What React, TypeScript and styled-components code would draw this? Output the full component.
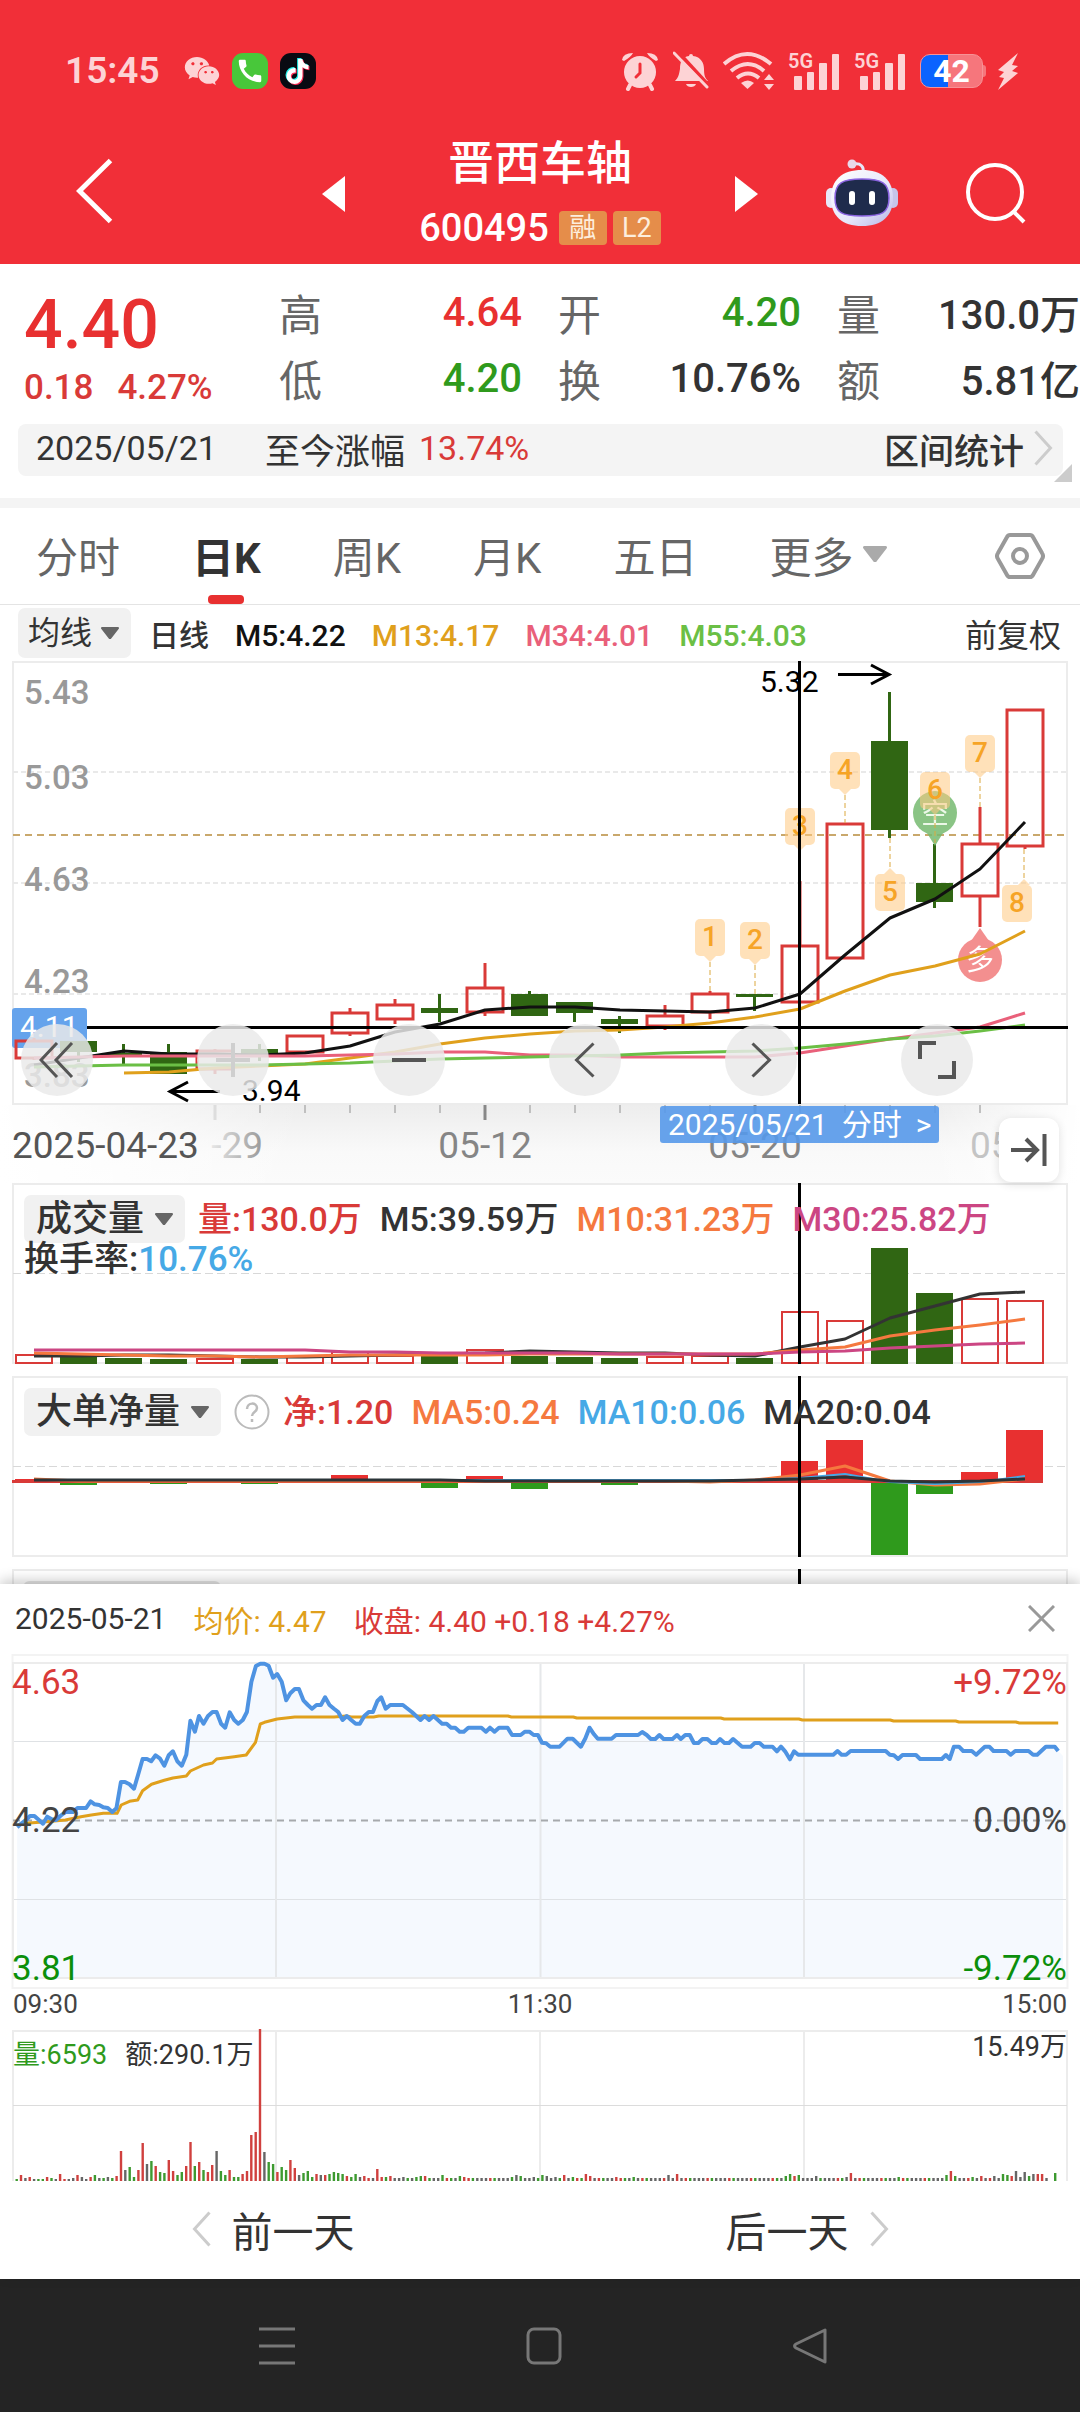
import React from "react";
import styled, { createGlobalStyle, css } from "styled-components";
import { FaWeixin, FaTiktok } from "react-icons/fa";
import { MdCall } from "react-icons/md";

const color = {
  brand: "#f12f38",
  up: "#d93a38",
  upBright: "#e83030",
  down: "#2f9a1c",
  downDark: "#306613",
  ink: "#333333",
  mute: "#666666",
  faint: "#999999",
  gold: "#e0a01c",
  pink: "#e9607a",
  lime: "#6bbf45",
  orange: "#f5793f",
  sky: "#46a9e6",
  magenta: "#cc4683",
  panel: "#f4f4f4",
  line: "#ececec",
  tag: "#65a3ec",
};

const GlobalStyle = createGlobalStyle`
  *, *::before, *::after { box-sizing: border-box; }
  body {
    margin: 0;
    background: #fff;
    color: ${color.ink};
    font-family: Roboto, "Noto Sans CJK SC", sans-serif;
  }
  button, select { font: inherit; color: inherit; border: 0; background: none; padding: 0; margin: 0; }
  button { display: inline-flex; align-items: center; justify-content: center; cursor: pointer; }
  svg { display: block; flex: none; }
`;

/* ---------- header ---------- */

const Header = styled.header`
  background: ${color.brand};
  color: #fff;
`;

const StatusBar = styled.div`
  display: flex;
  justify-content: space-between;
  align-items: center;
  height: 100px;
  padding: 42px 61px 0 65px;
  color: #fdd3d5;
`;

const StatusGroup = styled.div<{ $gap: number }>`
  display: flex;
  align-items: center;
  gap: ${(p) => p.$gap}px;
`;

const Clock = styled.time`
  font-size: 37px;
  line-height: 40px;
  font-weight: 600;
  margin-right: 12px;
`;

const AppBadge = styled.span<{ $bg: string }>`
  display: grid;
  place-items: center;
  width: 36px;
  height: 36px;
  border-radius: 11px;
  background: ${(p) => p.$bg};
  color: #fff;
`;

const TiktokMark = styled(FaTiktok)`
  filter: drop-shadow(1px 1px 0 #fe2c55) drop-shadow(-1px -1px 0 #25f4ee);
`;

const Signal = styled.span`
  display: grid;
  grid-template-columns: 52px;
  height: 40px;
  > * { grid-area: 1 / 1; }
`;

const SignalName = styled.span`
  font-size: 20px;
  line-height: 20px;
  font-weight: 600;
`;

const Battery = styled.span`
  position: relative;
  display: grid;
  place-items: center;
  width: 63px;
  height: 34px;
  border-radius: 10px;
  background: linear-gradient(90deg, #0a63ff 44%, #f6767c 44%);
  border: 1px solid #f79296;
  color: #fff;
  font-size: 32px;
  line-height: 32px;
  font-weight: 700;
  &::after {
    content: "";
    position: absolute;
    right: -4px;
    top: 10px;
    width: 3px;
    height: 12px;
    border-radius: 0 3px 3px 0;
    background: #f6767c;
  }
`;

const NavBar = styled.div`
  display: grid;
  grid-template-columns: 1fr 436px 1fr;
  align-items: center;
  height: 164px;
  padding-bottom: 6px;
`;

const NavLeft = styled.div`
  padding-left: 76px;
`;

const NavCenter = styled.div`
  display: flex;
  justify-content: space-between;
  align-items: center;
  padding-top: 30px;
`;

const NavRight = styled.div`
  display: flex;
  align-items: center;
  justify-content: flex-end;
  gap: 68px;
  padding-right: 54px;
`;

const NavIcon = styled.button`
  margin-top: 28px;
`;

const StockTitle = styled.div`
  display: grid;
  justify-items: center;
  row-gap: 16px;
  padding-top: 2px;
`;

const StockName = styled.h1`
  margin: 0;
  font-size: 46px;
  line-height: 50px;
  font-weight: 500;
`;

const StockCode = styled.div`
  display: flex;
  align-items: center;
  gap: 6px;
  font-size: 38px;
  line-height: 48px;
  font-weight: 500;
`;

const CodeTag = styled.span`
  padding: 0 9px;
  min-width: 48px;
  border-radius: 4px;
  background: #e58d4a;
  color: #fdeedd;
  font-size: 27px;
  line-height: 34px;
  font-weight: 400;
  text-align: center;
  &:first-of-type { margin-left: 4px; }
`;

/* ---------- quote ---------- */

const Quote = styled.section`
  padding-top: 15px;
  border-bottom: 10px solid ${color.panel};
`;

const QuoteGrid = styled.div`
  display: grid;
  grid-template-columns: 1fr repeat(3, 243px);
  column-gap: 36px;
  padding: 0 0 0 24px;
`;

const PriceBlock = styled.div`
  grid-row: span 2;
  padding-top: 6px;
  color: ${color.up};
  white-space: nowrap;
`;

const Price = styled.div`
  font-size: 68px;
  line-height: 80px;
  font-weight: 500;
  color: ${color.upBright};
`;

const Change = styled.div`
  display: flex;
  gap: 24px;
  font-size: 35px;
  line-height: 46px;
  font-weight: 500;
`;

const Stat = styled.div`
  display: flex;
  justify-content: space-between;
  align-items: center;
  height: 66px;
  white-space: nowrap;
`;

const StatName = styled.span`
  font-size: 43px;
  color: ${color.mute};
`;

const StatValue = styled.span<{ $tone?: string }>`
  font-size: 40px;
  font-weight: 500;
  color: ${(p) => p.$tone ?? color.ink};
`;

const RangeBar = styled.div`
  position: relative;
  display: flex;
  align-items: center;
  height: 52px;
  margin: 13px 17px 22px 18px;
  padding: 0 10px 4px 18px;
  border-radius: 8px;
  background: ${color.panel};
  font-size: 34px;
`;

const RangeLabel = styled.span`
  margin-left: 48px;
  margin-right: 14px;
  font-size: 35px;
`;

const RangeLink = styled.a`
  display: flex;
  align-items: center;
  gap: 9px;
  margin-left: auto;
  color: ${color.ink};
  text-decoration: none;
  font-size: 35px;
  font-weight: 500;
`;

const CornerFold = styled.span`
  position: absolute;
  right: -9px;
  bottom: -6px;
  border: 9px solid transparent;
  border-right-color: #ccc;
  border-bottom-color: #ccc;
`;

const Tone = styled.span<{ $tone: string }>`
  color: ${(p) => p.$tone};
`;

/* ---------- tabs and legends ---------- */

const Tabs = styled.nav`
  display: flex;
  align-items: center;
  gap: 72px;
  height: 97px;
  padding: 0 35px 0 36px;
  border-bottom: 1px solid #e4e4e4;
`;

const Tab = styled.button<{ $active?: boolean }>`
  position: relative;
  gap: 10px;
  height: 96px;
  padding-bottom: 4px;
  font-size: 42px;
  color: ${color.mute};
  ${(p) =>
    p.$active &&
    css`
      color: ${color.ink};
      font-weight: 700;
      &::after {
        content: "";
        position: absolute;
        bottom: 0;
        left: calc(50% - 18px);
        width: 36px;
        height: 9px;
        border-radius: 4px;
        background: ${color.upBright};
      }
    `}
`;

const TabSettings = styled.button`
  margin-left: auto;
`;

const AverageRow = styled.div`
  display: flex;
  align-items: center;
  gap: 18px;
  height: 56px;
  padding: 0 19px 0 18px;
  white-space: nowrap;
`;

const AverageList = styled.div`
  display: flex;
  align-items: baseline;
  flex: 1;
  gap: 26px;
  font-size: 30px;
  font-weight: 500;
`;

const AdjustButton = styled.button`
  font-size: 32px;
`;

const Chip = styled.label<{ $size: number }>`
  display: inline-flex;
  align-items: center;
  gap: ${(p) => (p.$size > 32 ? 10 : 8)}px;
  height: ${(p) => (p.$size > 32 ? 48 : 50)}px;
  padding: 0 12px 0 ${(p) => (p.$size > 32 ? 12 : 10)}px;
  border-radius: 7px;
  background: #f1f1f1;
  font-size: ${(p) => p.$size}px;
  line-height: 48px;
`;

const ChipSelect = styled.select`
  appearance: none;
  outline: 0;
`;

const Panel = styled.section`
  display: grid;
  > * { grid-area: 1 / 1; }
`;

const Drawing = styled.svg`
  width: 100%;
  height: auto;
  font-family: Roboto, "Noto Sans CJK SC", sans-serif;
`;

const PanelLegend = styled.div`
  z-index: 1;
  align-self: start;
  padding: 12px 24px 0;
  font-size: 34px;
  font-weight: 500;
  white-space: nowrap;
`;

const LegendLine = styled.div`
  display: flex;
  align-items: center;
  column-gap: 13px;
  line-height: 48px;
`;

const LegendValues = styled.div`
  display: flex;
  align-items: baseline;
  column-gap: 18px;
`;

const LegendNote = styled.div`
  font-size: 35px;
  line-height: 34px;
`;

/* ---------- controls lying over the main chart ---------- */

const Stage = styled.section`
  position: relative;
`;

const Controls = styled.div`
  position: absolute;
  left: 21px;
  top: 363px;
  display: flex;
  gap: 104px;
`;

const RoundButton = styled.button<{ $faded?: boolean }>`
  width: 72px;
  height: 72px;
  border-radius: 50%;
  background: rgba(234, 234, 234, 0.84);
  color: ${(p) => (p.$faded ? "#cfcfcf" : "#555")};
`;

const DayTag = styled.a`
  position: absolute;
  left: 660px;
  top: 445px;
  display: flex;
  gap: 14px;
  padding: 0 8px;
  border-radius: 3px;
  background: rgba(86, 153, 234, 0.9);
  color: #fff;
  font-size: 30px;
  line-height: 37px;
  text-decoration: none;
  white-space: nowrap;
`;

const LatestButton = styled.button`
  position: absolute;
  z-index: 2;
  right: 21px;
  top: 457px;
  width: 60px;
  height: 64px;
  border-radius: 12px;
  background: #fff;
  box-shadow: 0 2px 10px rgba(0, 0, 0, 0.12);
`;

/* ---------- intraday sheet ---------- */

const Sheet = styled.section`
  position: relative;
  background: #fff;
  box-shadow: 0 -4px 12px rgba(0, 0, 0, 0.2);
`;

const SheetHead = styled.div`
  display: flex;
  align-items: center;
  gap: 27px;
  height: 69px;
  padding: 0 25px 0 15px;
  font-size: 30px;
  white-space: nowrap;
`;

const CloseButton = styled.button`
  margin-left: auto;
`;

const TimeAxis = styled.div`
  display: flex;
  justify-content: space-between;
  height: 40px;
  padding: 0 13px;
  font-size: 26px;
  line-height: 30px;
  color: #444;
`;

const MinuteLegend = styled.div`
  z-index: 1;
  display: flex;
  align-items: start;
  gap: 18px;
  padding: 2px 13px;
  font-size: 27px;
  line-height: 32px;
  > :not(:last-child) { padding-top: 8px; }
  > :last-child { margin-left: auto; }
`;

const DayNav = styled.div`
  display: grid;
  grid-template-columns: 1fr 1fr;
  height: 98px;
  padding: 0 6px 2px;
`;

const DayButton = styled.button`
  gap: 20px;
  font-size: 41px;
`;

const SystemBar = styled.footer`
  display: flex;
  align-items: center;
  justify-content: space-between;
  height: 133px;
  padding: 0 252px 0 259px;
  background: #242424;
  color: #777;
`;

/* ---------- icons ---------- */

type ChevronProps = { dir: "left" | "right"; w: number; h: number; stroke: number; tone?: string };
const Chevron = ({ dir, w, h, stroke, tone = "currentColor" }: ChevronProps) => {
  const a = stroke / 2 + 1;
  const d =
    dir === "left"
      ? `M${w - a} ${a}L${a} ${h / 2}L${w - a} ${h - a}`
      : `M${a} ${a}L${w - a} ${h / 2}L${a} ${h - a}`;
  return (
    <svg width={w} height={h} viewBox={`0 0 ${w} ${h}`} fill="none" stroke={tone} strokeWidth={stroke}>
      <path d={d} />
    </svg>
  );
};

const Caret = ({ w = 18, tone = color.mute }: { w?: number; tone?: string }) => (
  <svg width={w} height={w * 0.7} viewBox="0 0 18 12" preserveAspectRatio="none">
    <path d="M1 0h16a1 1 0 0 1 .8 1.600L9.800 11.500a1 1 0 0 1-1.600 0L.2 1.600A1 1 0 0 1 1 0z" fill={tone} />
  </svg>
);

const AlarmIcon = () => (
  <svg width="38" height="40" viewBox="0 0 38 40">
    <path d="M1 9Q2 2 12 2Q10 6 3 10zM37 9Q36 2 26 2Q28 6 35 10z" fill="currentColor" />
    <path d="M9 34l-2 4M29 34l2 4" stroke="currentColor" strokeWidth="4" strokeLinecap="round" />
    <circle cx="19" cy="21" r="16" fill="currentColor" />
    <path d="M19 13v9l-4 4" fill="none" stroke={color.brand} strokeWidth="3" strokeLinecap="round" />
  </svg>
);

const MutedBellIcon = () => (
  <svg width="36" height="40" viewBox="0 0 36 40">
    <path d="M18 3q2 0 2 2c8 1 11 7 11 13 0 6 1 9 4 12H2c3-3 4-6 5-12C7 11 9 6 16 5q0-2 2-2z" fill="currentColor" />
    <path d="M13 33h10c-1 4-9 4-10 0z" fill="currentColor" />
    <path d="M3 -1l33 36" stroke={color.brand} strokeWidth="4" />
    <path d="M1 2l33 34" stroke="currentColor" strokeWidth="3" strokeLinecap="round" />
  </svg>
);

const WifiIcon = () => (
  <svg width="51" height="40" viewBox="0 0 51 40" fill="none" stroke="currentColor" strokeWidth="4">
    <path d="M1 13q23-20 47 0M8 20q17-14 33 0M14 27q11-9 22 0" />
    <path d="M18 32q7-5 13 0l-6.500 6z" fill="currentColor" stroke="none" />
    <path d="M41 29l5-6 5 6zM41 33l5 6 5-6z" fill="currentColor" stroke="none" />
  </svg>
);

const BarsIcon = () => (
  <svg width="52" height="40" viewBox="0 0 52 40" fill="currentColor">
    <rect x="6" y="25" width="8" height="14" rx="1" />
    <rect x="19" y="21" width="7" height="18" rx="1" />
    <rect x="31" y="12" width="8" height="27" rx="1" />
    <rect x="44" y="3" width="7" height="36" rx="1" />
  </svg>
);

const BoltIcon = () => (
  <svg width="22" height="38" viewBox="0 0 22 38">
    <path d="M21 1L1 18l6 2-5 5 5 1-6 12 20-17-6-2 6-5-6-1z" fill="currentColor" />
  </svg>
);

const RobotIcon = () => (
  <svg width="72" height="68" viewBox="0 0 72 68">
    <defs>
      <linearGradient id="shell" x1="0" y1="0" x2="1" y2="1">
        <stop offset="0" stopColor="#ffffff" />
        <stop offset="0.6" stopColor="#e6e6fa" />
        <stop offset="1" stopColor="#b5b4e6" />
      </linearGradient>
    </defs>
    <path d="M37 13c1-5-2-9-9-8" fill="none" stroke="#e6e6f8" strokeWidth="3" />
    <circle cx="26" cy="5" r="4.500" fill="#e9d9ea" />
    <rect x="0" y="29" width="10" height="20" rx="5" fill="#e8e8f8" />
    <rect x="62" y="29" width="10" height="20" rx="5" fill="#c6c5ea" />
    <path d="M36 11c20 0 31 10 31 28S56 67 36 67 5 57 5 39s11-28 31-28z" fill="url(#shell)" />
    <path d="M36 20c20 0 27 4 27 19s-7 18-27 18S9 54 9 39s7-19 27-19z" fill="#1f2b4c" stroke="#8a63e0" strokeWidth="1.500" />
    <rect x="23" y="32" width="6" height="14" rx="3" fill="#fff" />
    <rect x="43" y="32" width="6" height="14" rx="3" fill="#fff" />
  </svg>
);

const SearchIcon = () => (
  <svg width="60" height="62" viewBox="0 0 60 62" fill="none" stroke="#fff" strokeWidth="4">
    <circle cx="29" cy="30" r="27" />
    <path d="M47 49l11 11" />
  </svg>
);

const HexIcon = () => (
  <svg width="50" height="48" viewBox="0 0 50 48" fill="none" stroke={color.faint} strokeWidth="4">
    <path d="M15 3h20q2 0 3 2l9 16q2 3 0 6l-9 16q-1 2-3 2H15q-2 0-3-2L3 27q-2-3 0-6l9-16q1-2 3-2z" />
    <circle cx="25" cy="24" r="7" />
  </svg>
);

/* ---------- data ---------- */

const STEP = 45;
const FIRST = 34;
const cx = (i: number) => FIRST + i * STEP + (i > 3 ? 1 : 0);

// [direction, high, body top, body bottom, low] in drawing units
type Candle = [1 | -1, number, number, number, number];
const candles: Candle[] = [
  [1, 1038, 1041, 1058, 1060], [-1, 1041, 1041, 1052, 1062], [-1, 1044, 1053, 1055, 1064],
  [-1, 1044, 1052, 1074, 1074], [1, 1049, 1051, 1069, 1074], [-1, 1044, 1049, 1057, 1061],
  [1, 1036, 1036, 1052, 1052], [1, 1008, 1013, 1033, 1036], [1, 999, 1005, 1019, 1024],
  [-1, 994, 1008, 1013, 1022], [1, 963, 988, 1012, 1016], [-1, 991, 994, 1016, 1016],
  [-1, 1002, 1002, 1013, 1022], [-1, 1016, 1019, 1024, 1033], [1, 1005, 1016, 1026, 1030],
  [1, 991, 994, 1012, 1019], [-1, 994, 994, 997, 1011], [1, 881, 946, 1002, 1002],
  [1, 824, 824, 958, 958], [-1, 692, 741, 830, 838], [-1, 844, 883, 902, 908],
  [1, 807, 844, 896, 927], [1, 710, 710, 846, 849],
];

const avg5 = [1065, 1058, 1051, 1054, 1054, 1055, 1053, 1046, 1032, 1024, 1010, 1007, 1007, 1010, 1011, 1012, 1008, 994, 955, 918, 899, 869, 822];
const avg13 = [1073, 1072, 1068, 1066, 1064, 1058, 1052, 1044, 1038, 1034, 1031, 1030, 1027, 1023, 1017, 1009, 991, 975, 966, 954, 931];
const avg34 = [1058, 1057, 1056, 1056, 1056, 1056, 1056, 1055, 1054, 1052, 1052, 1055, 1055, 1057, 1057, 1057, 1057, 1053, 1046, 1039, 1033, 1027, 1013];
const avg55 = [1067, 1066, 1065, 1065, 1065, 1065, 1064, 1063, 1061, 1059, 1058, 1057, 1056, 1055, 1053, 1052, 1051, 1048, 1044, 1039, 1036, 1031, 1025];

const volumeTops = [1355, 1356, 1358, 1359, 1359, 1359, 1356, 1352, 1356, 1356, 1350, 1356, 1357, 1358, 1357, 1356, 1358, 1312, 1321, 1248, 1293, 1299, 1301];
const vol5 = [1356, 1356, 1355, 1355, 1356, 1357, 1357, 1356, 1355, 1354, 1353, 1351, 1352, 1353, 1353, 1355, 1356, 1347, 1339, 1318, 1306, 1294, 1292];
const vol10 = [1353, 1354, 1355, 1356, 1356, 1357, 1356, 1355, 1355, 1355, 1355, 1354, 1354, 1354, 1354, 1354, 1354, 1350, 1347, 1336, 1330, 1325, 1319];
const vol30 = [1350, 1350, 1350, 1350, 1350, 1350, 1350, 1352, 1352, 1353, 1353, 1353, 1353, 1354, 1354, 1354, 1354, 1352, 1351, 1348, 1346, 1344, 1343];

const netEnds: Record<number, number> = { 0: 1479, 1: 1485, 3: 1484, 5: 1484, 7: 1475, 9: 1488, 10: 1476, 11: 1489, 13: 1485, 17: 1461, 18: 1440, 19: 1555, 20: 1494, 21: 1472, 22: 1430 };
const flat = (n: number, y: number) => Array.from({ length: n }, () => y);
const net5 = [1479, ...flat(14, 1481), 1482, 1480, 1475, 1466, 1481, 1485, 1484, 1479];
const net10 = [...flat(17, 1480), 1478, 1474, 1482, 1484, 1482, 1476];
const net20 = [...flat(10, 1480), ...flat(6, 1481), 1480, 1479, 1477, 1481, 1482, 1481, 1479];

const series = (ys: number[], from = 0) => ys.map((y, i) => `${cx(i + from)},${y}`).join(" ");

// Intraday samples on the recorder's grid: x in 1/2.904 units, y in thirds
const fromGrid = (flatList: number[]) => {
  const out: string[] = [];
  for (let i = 0; i < flatList.length; i += 2)
    out.push(`${(flatList[i] / 2.904).toFixed(1)},${(1590 + flatList[i + 1] / 3).toFixed(1)}`);
  return out.join(" ");
};

const priceLine = fromGrid([
  50,712,60,702,75,690,87,678,100,678,113,690,125,701,137,680,150,688,163,690,175,678,190,666,212,666,225,654,250,654,263,634,
  275,643,288,645,300,652,313,654,326,666,338,655,351,576,363,576,376,583,389,596,401,554,414,507,427,507,439,514,452,496,464,505,
  477,527,490,496,502,484,515,514,528,527,541,494,553,392,566,425,578,378,591,401,604,378,617,366,629,366,642,401,654,413,667,367,
  680,390,692,401,705,390,717,366,730,275,743,228,756,221,768,221,780,227,793,263,805,252,818,275,831,331,843,310,856,297,868,297,
  881,331,894,345,906,356,919,345,932,345,944,322,957,345,970,356,982,366,995,390,1007,378,1020,390,1033,401,1045,401,1058,378,
  1071,366,1083,366,1096,333,1107,322,1120,356,1133,345,1170,345,1196,366,1221,390,1233,378,1246,390,1259,378,1284,401,1297,401,
  1310,413,1322,413,1335,425,1347,425,1360,413,1398,413,1411,425,1423,413,1436,425,1449,413,1474,413,1487,435,1512,435,1524,425,
  1537,425,1550,435,1562,435,1574,458,1586,460,1598,470,1625,470,1648,446,1663,446,1687,470,1700,445,1712,413,1725,433,1736,446,
  1776,446,1789,435,1853,435,1865,426,1878,435,1890,447,1903,447,1915,435,1927,447,1953,447,1966,435,1977,447,1990,435,2003,435,
  2015,459,2028,459,2040,447,2054,447,2067,459,2080,459,2091,447,2104,459,2117,459,2129,447,2155,470,2180,470,2192,459,2206,459,
  2218,470,2243,470,2256,484,2268,470,2280,484,2294,508,2306,484,2318,494,2420,494,2432,483,2444,494,2457,494,2470,483,2572,483,
  2584,494,2596,496,2608,507,2621,495,2660,495,2672,507,2735,507,2747,495,2758,507,2770,470,2785,470,2797,483,2822,483,2835,494,
  2860,470,2873,470,2885,483,2923,483,2935,494,2948,483,2987,483,3000,494,3012,494,3037,470,3063,470,3073,483,
]);

const meanLine = fromGrid([
  50,705,85,699,125,696,190,690,235,680,265,675,300,670,340,670,352,645,376,634,400,630,414,602,440,583,477,571,502,564,541,558,
  553,543,591,525,617,519,629,507,680,500,715,495,742,457,756,402,768,397,805,387,856,381,970,381,1005,378,1020,381,1085,381,
  1100,378,1475,378,1485,381,1665,381,1675,384,2093,384,2103,387,2320,387,2330,390,2585,390,2595,393,2775,393,2785,396,2950,396,
  2960,399,3073,399,
]);

// One entry a minute: r up, g down, k unchanged, followed by the bar height
const openingMinutes =
  "g1 r5 k2 r3 k1 g1 g1 r3 g2 k1 r6 r1 k1 k2 r5 k3 k1 r3 g5 k2 g2 k3 g2 r4 r29 k10 g13 g3 r10 r37 k16 g19 r14 g8 g7 r20 r9 g5 g8 r14 r38 g14 r18 g10 r8 r15 k29 g9 g5 r10 g3 g3 r6 r9 r45 r48 r151 k28 g18 g16 r8 g13 g10 r20 r12 k5 g7 g9 g3 r6 k5 r5 g6 g8 g7 g6 r4 g3 g6 k3 r4 r2 k2 r11 r3 g3 r4";
const laterMinutes: Record<number, string> = {
  89: "k3", 92: "g3", 93: "g4", 94: "r4", 98: "g5", 102: "g4", 103: "r3", 114: "g3", 115: "k5", 116: "g4", 119: "k3",
  121: "g5", 122: "k4", 124: "k3", 126: "r5", 128: "g3", 131: "r6", 132: "r4", 138: "r3", 142: "g3", 150: "k5", 152: "r6",
  177: "g4", 178: "g6", 179: "r4", 180: "g5", 184: "k4", 191: "k3", 192: "r7", 203: "g3", 214: "g5", 215: "r9", 216: "g4",
  220: "g3", 222: "r4", 225: "k4", 227: "g6", 228: "g5", 229: "r4", 230: "k9", 231: "k3", 232: "k8", 233: "g4", 234: "k6",
  235: "r6", 236: "r6", 237: "k2", 238: "", 239: "g7",
};
const minuteTone: Record<string, string> = { r: "#d0403e", g: "#3d9a30", k: "#666" };
const minutes = (() => {
  const list = openingMinutes.split(" ");
  const filler = ["g2", "k2", "k2", "r2", "k2"];
  for (let i = list.length; i < 240; i++) list.push(laterMinutes[i] ?? filler[(i * 7) % 5]);
  return list;
})();

type Mark = { n: number; x: number; top: number; tipX?: number; from: number; to: number; up?: boolean };
const marks: Mark[] = [
  { n: 1, x: 710, top: 919, from: 962, to: 991 },
  { n: 2, x: 755, top: 922, from: 965, to: 994 },
  { n: 3, x: 800, top: 808, from: 850, to: 850 },
  { n: 4, x: 845, top: 752, from: 795, to: 823 },
  { n: 5, x: 890, top: 874, from: 838, to: 868, up: true },
  { n: 6, x: 935, top: 772, from: 815, to: 843 },
  { n: 7, x: 980, top: 735, from: 778, to: 807 },
  { n: 8, x: 1017, top: 885, tipX: 1024, from: 849, to: 880, up: true },
];

/* ---------- chart parts ---------- */

const Line = ({ pts, tone, w = 3 }: { pts: string; tone: string; w?: number }) => (
  <polyline points={pts} fill="none" stroke={tone} strokeWidth={w} strokeLinejoin="round" />
);

const Frame = ({ y, h }: { y: number; h: number }) => (
  <rect x="13" y={y} width="1054" height={h} fill="none" stroke={color.line} strokeWidth="2" />
);

const Crosshair = ({ y1, y2 }: { y1: number; y2: number }) => (
  <path d={`M799.500 ${y1}V${y2}`} stroke="#000" strokeWidth="3" />
);

const MarkLabel = ({ n, x, top, tipX, from, to, up }: Mark) => {
  const tip = tipX ?? x;
  return (
    <g>
      <path d={`M${tip} ${from}V${to}`} stroke="#dba83e" strokeWidth="1" strokeDasharray="5 3" />
      <rect x={x - 15} y={top} width="30" height="37" rx="5" fill="#ffc880" fillOpacity="0.55" />
      <path
        d={up ? `M${tip - 6} ${top}l6 -6l6 6z` : `M${tip - 6} ${top + 37}l6 6l6 -6z`}
        fill="#ffc880"
        fillOpacity="0.55"
      />
      <text x={x} y={top + 27} textAnchor="middle" fontSize="28" fontWeight="500" fill="#f6a426">
        {n}
      </text>
    </g>
  );
};

const CandleChart = () => (
  <Drawing viewBox="0 661 1080 522" role="img" aria-label="日K">
    <defs>
      <linearGradient id="hazeDown" x1="0" y1="0" x2="0" y2="1">
        <stop offset="0" stopColor="#ededed" />
        <stop offset="0.6" stopColor="#f9f9f9" />
        <stop offset="1" stopColor="#fbfbfb" />
      </linearGradient>
      <linearGradient id="hazeSide" x1="0" y1="0" x2="1" y2="0">
        <stop offset="0" stopColor="#fff" stopOpacity="1" />
        <stop offset="0.28" stopColor="#fff" stopOpacity="0" />
        <stop offset="0.86" stopColor="#fff" stopOpacity="0" />
        <stop offset="1" stopColor="#fff" stopOpacity="1" />
      </linearGradient>
      <linearGradient id="dateFade" x1="0" y1="0" x2="1" y2="0">
        <stop offset="0" stopColor="#e6e6e6" />
        <stop offset="1" stopColor="#999" />
      </linearGradient>
    </defs>
    <rect x="0" y="1105" width="1080" height="78" fill="url(#hazeDown)" />
    <rect x="0" y="1105" width="1080" height="78" fill="url(#hazeSide)" />
    <Frame y={662} h={442} />
    <path d="M13 772H1067M13 883H1067M13 994H1067" stroke="#e9e9e9" strokeWidth="2" strokeDasharray="5 3" />
    <path d="M13 835H1067" stroke="#c9a86c" strokeWidth="2" strokeDasharray="7 5" />
    <g fontSize="33" fontWeight="500" fill={color.faint}>
      <text x="24" y="704">5.43</text>
      <text x="24" y="789">5.03</text>
      <text x="24" y="891">4.63</text>
      <text x="24" y="993">4.23</text>
      <text x="24" y="1087">3.83</text>
    </g>
    {Array.from({ length: 17 }, (_, k) => k + 4).concat([21]).map((i) => {
      const major = i === 4 || i === 10 || i === 16;
      return (
        <path
          key={i}
          d={`M${cx(i)} 1105V${major ? 1120 : 1113}`}
          stroke={major && i > 4 ? "#888" : i === 4 ? "#ddd" : "#c0c0c0"}
          strokeWidth={major ? 3 : 2}
        />
      );
    })}
    <rect x="12" y="1008" width="75" height="40" rx="3" fill={color.tag} />
    <text x="20" y="1037" fontSize="30" fill="#fff">4.11</text>
    {candles.map(([dir, high, top, bottom, low], i) => {
      const x = cx(i);
      return dir > 0 ? (
        <g key={i} stroke={color.up} strokeWidth="3" fill="none">
          <rect x={x - 18} y={top} width="36" height={bottom - top} />
          <path d={`M${x} ${high}V${top}M${x} ${bottom}V${low}`} />
        </g>
      ) : (
        <g key={i} fill={color.downDark}>
          <rect x={x - 19} y={top} width="37" height={bottom - top} />
          <rect x={x - 2} y={high} width="3" height={low - high} />
        </g>
      );
    })}
    <g opacity="0.85">
      <circle cx="935" cy="813" r="22" fill="#76ba70" />
      <path d="M927 833h16l-8 13z" fill="#76ba70" />
      <text x="935" y="824" textAnchor="middle" fontSize="28" fill="#e9f7e4">空</text>
      <circle cx="980" cy="960" r="22" fill="#f27c7c" />
      <path d="M971 941h18l-9 -13z" fill="#f27c7c" />
      <text x="980" y="970" textAnchor="middle" fontSize="28" fill="#fff">多</text>
    </g>
    <Line pts={series(avg5)} tone="#111" />
    <Line pts={series(avg13, 2)} tone={color.gold} />
    <Line pts={series(avg34)} tone={color.pink} />
    <Line pts={series(avg55)} tone={color.lime} />
    {marks.map((m) => (
      <MarkLabel key={m.n} {...m} />
    ))}
    <g fontSize="30" fill="#000">
      <text x="760" y="692">5.32</text>
      <text x="242" y="1101">3.94</text>
    </g>
    <path d="M838 674.500H889M871 665l18 9.500l-18 9.500M220 1091.500H170M188 1082l-18 9.500l18 9.500" fill="none" stroke="#000" strokeWidth="3" />
    <path d="M87 1027.500H1068" stroke="#000" strokeWidth="3" />
    <Crosshair y1={661} y2={1104} />
    <g fontSize="37" fontWeight="400" fill="#858585">
      <text x="12" y="1158" fill="#555">2025-04-23</text>
      <text x="263" y="1158" textAnchor="end" fill="url(#dateFade)">-29</text>
      <text x="485" y="1158" textAnchor="middle">05-12</text>
      <text x="755" y="1158" textAnchor="middle">05-20</text>
      <text x="970" y="1158" fill="#c4c4c4">05</text>
    </g>
  </Drawing>
);

const VolumeChart = () => (
  <Drawing viewBox="0 1183 1080 193" role="img" aria-label="成交量">
    <Frame y={1184} h={179} />
    <path d="M13 1273.500H1067" stroke="#d8d8d8" strokeDasharray="8 4" />
    {volumeTops.map((top, i) =>
      candles[i][0] > 0 ? (
        <rect key={i} x={cx(i) - 18} y={top} width="36" height={1363 - top} fill="none" stroke={color.up} strokeWidth="2" />
      ) : (
        <rect key={i} x={cx(i) - 19} y={top} width="37" height={1364 - top} fill={color.downDark} />
      )
    )}
    <Line pts={series(vol5)} tone={color.ink} />
    <Line pts={series(vol10)} tone={color.orange} />
    <Line pts={series(vol30)} tone={color.magenta} />
    <Crosshair y1={1183} y2={1364} />
  </Drawing>
);

const NetChart = () => (
  <Drawing viewBox="0 1376 1080 193" role="img" aria-label="大单净量">
    <Frame y={1377} h={179} />
    <path d="M13 1466.500H1067" stroke="#d8d8d8" strokeDasharray="8 4" />
    {Object.entries(netEnds).map(([k, end]) => (
      <rect
        key={k}
        x={cx(Number(k)) - 19}
        y={Math.min(end, 1482)}
        width="37"
        height={Math.abs(end - 1482)}
        fill={end < 1482 ? color.upBright : color.down}
      />
    ))}
    <path d={`M12 1481.500H${cx(22) + 18}`} stroke={color.up} strokeWidth="3" />
    <Line pts={series(net5)} tone={color.orange} />
    <Line pts={series(net10)} tone={color.sky} w={2} />
    <Line pts={series(net20)} tone="#2b3438" />
    <Crosshair y1={1376} y2={1557} />
  </Drawing>
);

const NextPanelPeek = () => (
  <Drawing viewBox="0 1569 1080 15" aria-hidden="true">
    <path d="M13 1584V1570H1067V1584" fill="none" stroke={color.line} strokeWidth="2" />
    <path d="M24 1584q2-3 6-3h184q4 0 6 3z" fill="#e4e4e4" />
    <Crosshair y1={1569} y2={1584} />
  </Drawing>
);

const IntradayChart = () => (
  <Drawing viewBox="0 1653 1080 336" role="img" aria-label="分时">
    <rect x="12.500" y="1655" width="1055" height="333" fill="none" stroke="#f3f3f3" strokeWidth="2" />
    <polygon points={`17,1978 ${priceLine} 1063,1756 1063,1978`} fill="#f5f9fe" />
    <path d="M13 1741.500H1067M13 1899.500H1067" stroke="#dfe2e5" />
    <path d="M276 1663V1978M540.500 1663V1978M804 1663V1978" stroke="#e6e8ea" strokeWidth="2" />
    <rect x="13" y="1663" width="1054" height="315" fill="none" stroke={color.line} strokeWidth="2" />
    <path d="M13 1820.500H1067" stroke="#a6a9ac" strokeWidth="2" strokeDasharray="7 5" />
    <Line pts={meanLine} tone={color.gold} />
    <Line pts={priceLine} tone="#4e93e2" w={4} />
    <g fontSize="35">
      <text x="12" y="1694" fill={color.up}>4.63</text>
      <text x="12" y="1832" fill="#444">4.22</text>
      <text x="12" y="1980" fill="#0b8f0b">3.81</text>
      <g textAnchor="end">
        <text x="1067" y="1694" fill={color.up}>+9.72%</text>
        <text x="1067" y="1832" fill="#444">0.00%</text>
        <text x="1067" y="1980" fill="#0b8f0b">-9.72%</text>
      </g>
    </g>
  </Drawing>
);

const MinuteChart = () => (
  <Drawing viewBox="0 2029 1080 152" role="img" aria-label="分时成交量">
    <path d="M13 2181V2031H1067V2181M276 2031V2181M540 2031V2181M804 2031V2181" fill="none" stroke={color.line} strokeWidth="2" />
    <path d="M13 2105.500H1067" stroke="#dcdcdc" />
    {minutes.map((m, i) =>
      m ? (
        <rect
          key={i}
          x={(15.5 + i * 4.345).toFixed(1)}
          y={2180 - Number(m.slice(1))}
          width="2.400"
          height={Number(m.slice(1)) + 1}
          fill={minuteTone[m[0]]}
        />
      ) : null
    )}
  </Drawing>
);

const SignalMeter = () => (
  <Signal>
    <SignalName>5G</SignalName>
    <BarsIcon />
  </Signal>
);

const Picker = ({ name, size, options }: { name: string; size: number; options: string[] }) => (
  <Chip $size={size}>
    <ChipSelect aria-label={name} defaultValue={options[0]}>
      {options.map((o) => (
        <option key={o}>{o}</option>
      ))}
    </ChipSelect>
    <Caret />
  </Chip>
);

const stats: [string, string, string?][] = [
  ["高", "4.64", color.upBright],
  ["开", "4.20", color.down],
  ["量", "130.0万"],
  ["低", "4.20", color.down],
  ["换", "10.76%"],
  ["额", "5.81亿"],
];

export default function App() {
  return (
    <>
      <GlobalStyle />
      <Header>
        <StatusBar>
          <StatusGroup $gap={12}>
            <Clock>15:45</Clock>
            <FaWeixin size={36} />
            <AppBadge $bg="#48c73a"><MdCall size={30} /></AppBadge>
            <AppBadge $bg="#090a12"><TiktokMark size={25} /></AppBadge>
          </StatusGroup>
          <StatusGroup $gap={14}>
            <AlarmIcon />
            <MutedBellIcon />
            <WifiIcon />
            <SignalMeter />
            <SignalMeter />
            <Battery>42</Battery>
            <BoltIcon />
          </StatusGroup>
        </StatusBar>
        <NavBar>
          <NavLeft>
            <NavIcon aria-label="返回"><Chevron dir="left" w={38} h={68} stroke={5} /></NavIcon>
          </NavLeft>
          <NavCenter>
            <button aria-label="上一只">
              <svg width="23" height="36" viewBox="0 0 23 36"><path d="M23 0V36L0 18z" fill="#fff" /></svg>
            </button>
            <StockTitle>
              <StockName>晋西车轴</StockName>
              <StockCode>
                600495
                <CodeTag>融</CodeTag>
                <CodeTag>L2</CodeTag>
              </StockCode>
            </StockTitle>
            <button aria-label="下一只">
              <svg width="23" height="36" viewBox="0 0 23 36"><path d="M0 0V36L23 18z" fill="#fff" /></svg>
            </button>
          </NavCenter>
          <NavRight>
            <NavIcon aria-label="智能助手"><RobotIcon /></NavIcon>
            <NavIcon aria-label="搜索"><SearchIcon /></NavIcon>
          </NavRight>
        </NavBar>
      </Header>

      <Quote>
        <QuoteGrid>
          <PriceBlock>
            <Price>4.40</Price>
            <Change><span>0.18</span><span>4.27%</span></Change>
          </PriceBlock>
          {stats.map(([name, value, tone]) => (
            <Stat key={name}>
              <StatName>{name}</StatName>
              <StatValue $tone={tone}>{value}</StatValue>
            </Stat>
          ))}
        </QuoteGrid>
        <RangeBar>
          <span>2025/05/21</span>
          <RangeLabel>至今涨幅</RangeLabel>
          <Tone $tone={color.up}>13.74%</Tone>
          <RangeLink href="#range">
            区间统计
            <Chevron dir="right" w={20} h={38} stroke={3} tone="#ccc" />
          </RangeLink>
          <CornerFold />
        </RangeBar>
      </Quote>

      <Tabs>
        <Tab>分时</Tab>
        <Tab $active>日K</Tab>
        <Tab>周K</Tab>
        <Tab>月K</Tab>
        <Tab>五日</Tab>
        <Tab aria-haspopup="menu">更多<Caret w={24} tone="#aaa" /></Tab>
        <TabSettings aria-label="设置"><HexIcon /></TabSettings>
      </Tabs>

      <AverageRow>
        <Picker name="主图指标" size={32} options={["均线"]} />
        <AverageList>
          <span>日线</span>
          <Tone $tone="#111">M5:4.22</Tone>
          <Tone $tone={color.gold}>M13:4.17</Tone>
          <Tone $tone={color.pink}>M34:4.01</Tone>
          <Tone $tone={color.lime}>M55:4.03</Tone>
        </AverageList>
        <AdjustButton>前复权</AdjustButton>
      </AverageRow>

      <Stage>
        <CandleChart />
        <Controls>
          <RoundButton aria-label="最早">
            <svg width="36" height="36" viewBox="0 0 36 36" fill="none" stroke="currentColor" strokeWidth="3"><path d="M18 1L2 18l16 17M33 1L17 18l16 17" /></svg>
          </RoundButton>
          <RoundButton aria-label="放大" $faded>
            <svg width="34" height="34" viewBox="0 0 34 34" stroke="currentColor" strokeWidth="4"><path d="M17 0V34M0 17H34" /></svg>
          </RoundButton>
          <RoundButton aria-label="缩小">
            <svg width="34" height="34" viewBox="0 0 34 34" stroke="currentColor" strokeWidth="4"><path d="M0 17H34" /></svg>
          </RoundButton>
          <RoundButton aria-label="左移"><Chevron dir="left" w={22} h={38} stroke={3} /></RoundButton>
          <RoundButton aria-label="右移"><Chevron dir="right" w={22} h={38} stroke={3} /></RoundButton>
          <RoundButton aria-label="全屏">
            <svg width="38" height="38" viewBox="0 0 38 38" fill="none" stroke="currentColor" strokeWidth="4"><path d="M2 18V2H18M36 20V36H20" /></svg>
          </RoundButton>
        </Controls>
        <DayTag href="#day"><span>2025/05/21</span><span>分时</span><span>&gt;</span></DayTag>
        <LatestButton aria-label="最新">
          <svg width="36" height="34" viewBox="0 0 36 34" fill="none" stroke="#555" strokeWidth="4"><path d="M0 17H25M15 6l11 11-11 11M33.500 1V33" /></svg>
        </LatestButton>
      </Stage>

      <Panel>
        <VolumeChart />
        <PanelLegend>
          <LegendLine>
            <Picker name="副图指标一" size={36} options={["成交量"]} />
            <LegendValues>
              <Tone $tone={color.up}>量:130.0万</Tone>
              <Tone $tone={color.ink}>M5:39.59万</Tone>
              <Tone $tone={color.orange}>M10:31.23万</Tone>
              <Tone $tone={color.magenta}>M30:25.82万</Tone>
            </LegendValues>
          </LegendLine>
          <LegendNote>换手率:<Tone $tone={color.sky}>10.76%</Tone></LegendNote>
        </PanelLegend>
      </Panel>

      <Panel>
        <NetChart />
        <PanelLegend>
          <LegendLine>
            <Picker name="副图指标二" size={36} options={["大单净量"]} />
            <button aria-label="指标说明">
              <svg width="36" height="36" viewBox="0 0 36 36">
                <circle cx="18" cy="18" r="16.500" fill="none" stroke="#bbb" strokeWidth="2" />
                <path d="M13 15c0-7 10-7 10-1 0 4-5 4-5 8M18 25v3" fill="none" stroke="#bbb" strokeWidth="2.500" />
              </svg>
            </button>
            <LegendValues>
              <Tone $tone={color.up}>净:1.20</Tone>
              <Tone $tone={color.orange}>MA5:0.24</Tone>
              <Tone $tone={color.sky}>MA10:0.06</Tone>
              <Tone $tone={color.ink}>MA20:0.04</Tone>
            </LegendValues>
          </LegendLine>
        </PanelLegend>
      </Panel>
      <NextPanelPeek />

      <Sheet>
        <SheetHead>
          <span>2025-05-21</span>
          <Tone $tone={color.gold}>均价: 4.47</Tone>
          <Tone $tone={color.up}>收盘: 4.40 +0.18 +4.27%</Tone>
          <CloseButton aria-label="关闭">
            <svg width="27" height="27" viewBox="0 0 27 27" stroke="#999" strokeWidth="3"><path d="M1 1L26 26M26 1L1 26" /></svg>
          </CloseButton>
        </SheetHead>
        <IntradayChart />
        <TimeAxis><span>09:30</span><span>11:30</span><span>15:00</span></TimeAxis>
        <Panel>
          <MinuteChart />
          <MinuteLegend>
            <Tone $tone={color.down}>量:6593</Tone>
            <span>额:290.1万</span>
            <span>15.49万</span>
          </MinuteLegend>
        </Panel>
        <DayNav>
          <DayButton><Chevron dir="left" w={20} h={38} stroke={3} tone="#ccc" />前一天</DayButton>
          <DayButton>后一天<Chevron dir="right" w={20} h={38} stroke={3} tone="#ccc" /></DayButton>
        </DayNav>
      </Sheet>

      <SystemBar>
        <button aria-label="最近任务">
          <svg width="36" height="38" viewBox="0 0 36 38" stroke="currentColor" strokeWidth="3"><path d="M0 2H36M0 19H36M0 36H36" /></svg>
        </button>
        <button aria-label="主屏幕">
          <svg width="36" height="38" viewBox="0 0 36 38" fill="none" stroke="currentColor" strokeWidth="3"><rect x="2" y="2" width="32" height="34" rx="6" /></svg>
        </button>
        <button aria-label="后退">
          <svg width="36" height="38" viewBox="0 0 36 38" fill="none" stroke="currentColor" strokeWidth="3" strokeLinejoin="round"><path d="M33 3V35L4 21q-3-2 0-4z" /></svg>
        </button>
      </SystemBar>
    </>
  );
}
